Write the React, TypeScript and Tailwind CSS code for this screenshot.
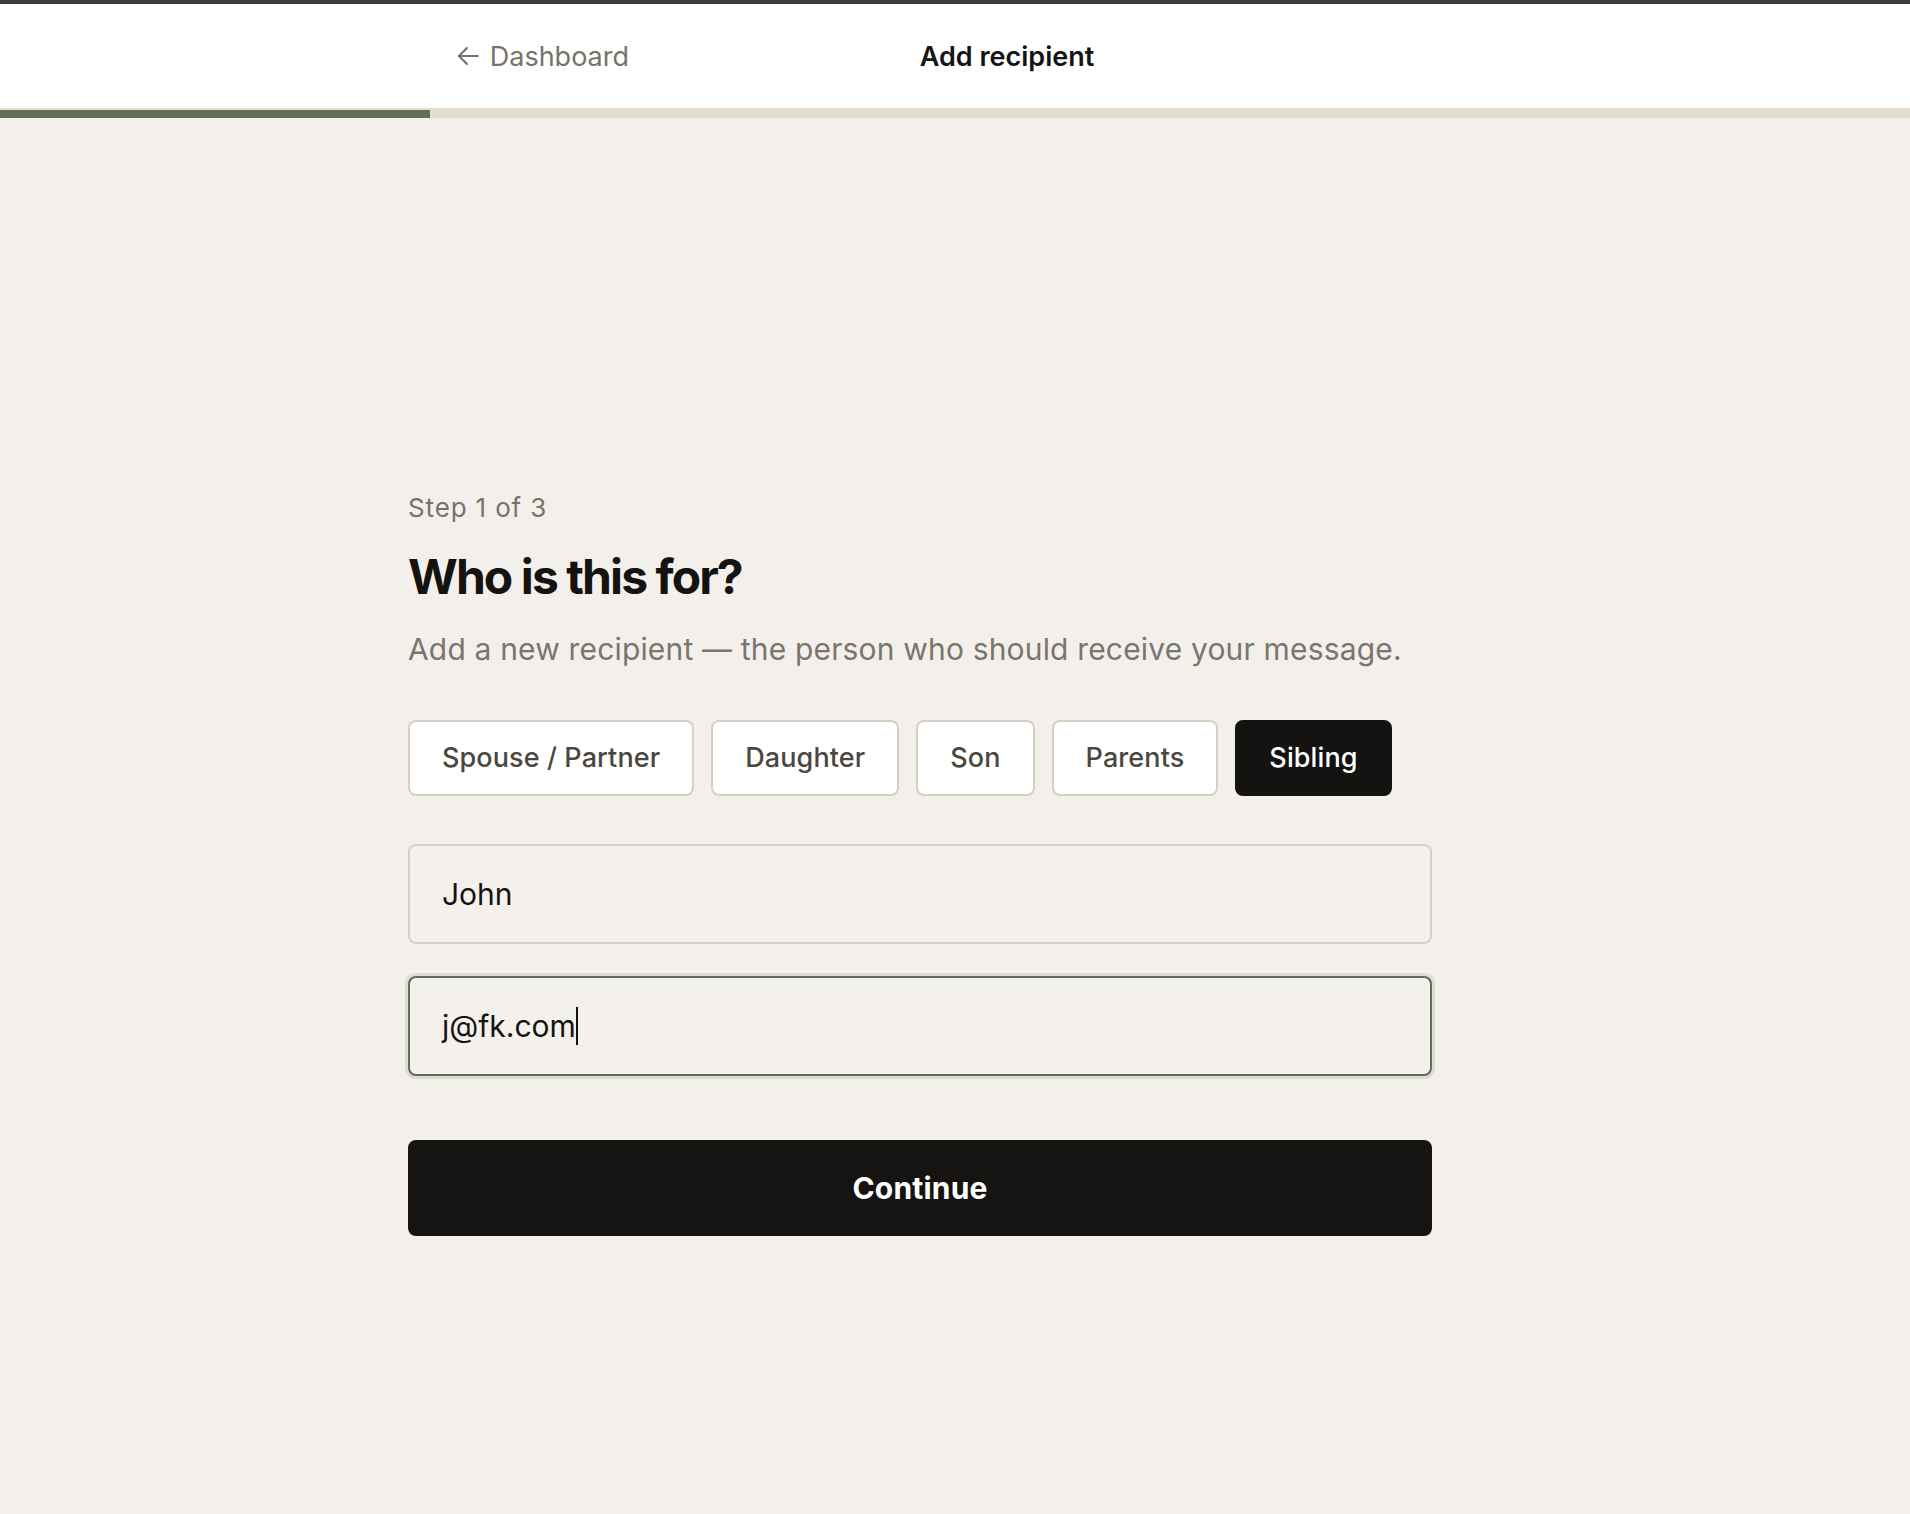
import React from "react";

const chips = ["Spouse / Partner", "Daughter", "Son", "Parents", "Sibling"];

export default function App() {
  return (
    <div
      className="min-h-[1514px] bg-[#f3f0eb] flex flex-col"
      style={{ fontFamily: "Inter, 'Noto Sans', sans-serif" }}
    >
      <div className="h-1 bg-[#3b3b3b]" />
      <header className="bg-white h-[104px] flex items-center pl-[457px]">
        <div className="w-[1100px] flex items-center justify-between">
          <a className="flex items-center gap-[11px] text-[27px] leading-none text-[#77726a] w-[172px]">
            <svg width="22" height="20" viewBox="0 0 22 20" fill="none" stroke="#77726a" strokeWidth="2.2" strokeLinecap="round" strokeLinejoin="round">
              <path d="M2 10H21" />
              <path d="M10 2L2 10L10 18" />
            </svg>
            <span>Dashboard</span>
          </a>
          <h1 className="text-[27px] leading-none font-semibold text-[#141414]">Add recipient</h1>
          <div className="w-[172px]" />
        </div>
      </header>
      <div className="h-[10px] bg-[#e4ddd0] flex items-end">
        <div className="h-[8px] w-[430px] bg-[#5f6f55]" />
      </div>

      <main className="pl-[408px] pt-[377px]">
        <div className="w-[1024px] flex flex-col">
          <p className="text-[26px] leading-none tracking-[0.85px] text-[#77726a]">Step 1 of 3</p>
          <h2 className="mt-[32px] text-[48px] leading-none font-bold tracking-[-0.04em] text-[#141311]">
            Who is this for?
          </h2>
          <p className="mt-[33px] text-[30px] leading-none tracking-[0.17px] text-[#7a756d]">
            Add a new recipient — the person who should receive your message.
          </p>

          <div className="mt-[56px] flex gap-[17px]">
            {chips.map((c) =>
              c === "Sibling" ? (
                <button
                  key={c}
                  className="h-[76px] px-8 rounded-lg border-2 border-[#141311] bg-[#141311] text-white text-[27px] tracking-[0.1px] font-medium"
                >
                  {c}
                </button>
              ) : (
                <button
                  key={c}
                  className="h-[76px] px-8 rounded-lg border-2 border-[#d6d0c2] bg-white text-[#4a4741] text-[27px] tracking-[0.1px] font-medium"
                >
                  {c}
                </button>
              )
            )}
          </div>

          <div className="mt-[48px] flex flex-col gap-8">
            <div className="h-[100px] rounded-lg border-2 border-[#d6d0c4] bg-[#f4f1ec] flex items-center px-8 text-[30px] text-[#141414]">
              John
            </div>
            <div className="h-[100px] rounded-lg border-2 border-[#5f6f55] bg-[#f4f1ec] shadow-[0_0_0_3px_#dddbd0] flex items-center px-8 text-[30px] text-[#141414]">
              <span>j@fk.com</span>
              <span className="w-[2px] h-[38px] bg-[#141414]" />
            </div>
          </div>

          <button className="mt-[64px] h-[96px] rounded-lg bg-[#151412] text-white text-[30px] font-bold tracking-[0.2px]">
            Continue
          </button>
        </div>
      </main>
    </div>
  );
}
